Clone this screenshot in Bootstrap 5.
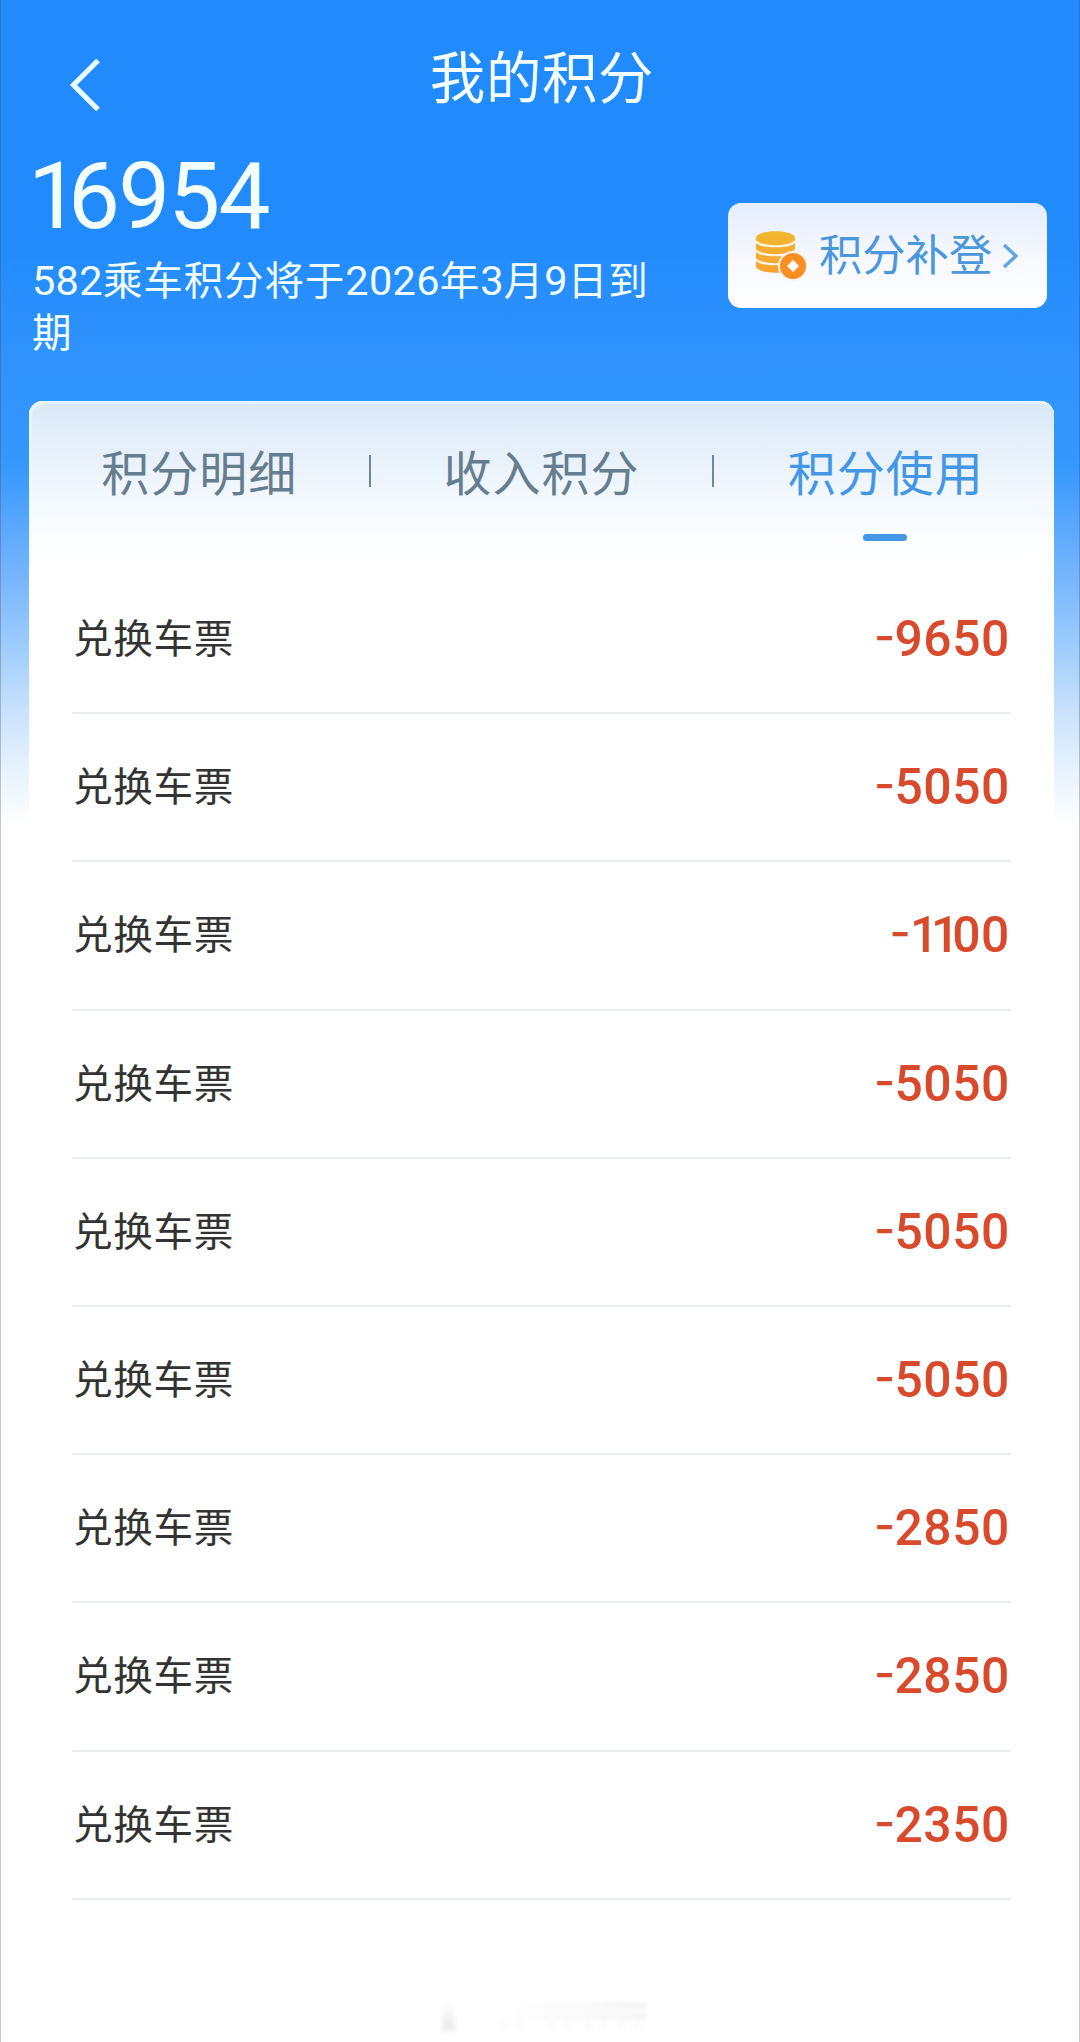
<!DOCTYPE html>
<html lang="zh-CN">
<head>
<meta charset="utf-8">
<meta name="viewport" content="width=device-width, initial-scale=1">
<title>我的积分</title>
<link href="https://cdn.jsdelivr.net/npm/bootstrap@5.3.0/dist/css/bootstrap.min.css" rel="stylesheet">
<style>
body{font-family:Roboto,"Noto Sans CJK SC",sans-serif;background:#fff;color:#333}
.screen{width:1080px;height:2042px;border:solid rgba(70,70,80,.3);border-width:0 1px;background:linear-gradient(#218bfd 0,#218bfd 240px,#2f92fd 350px,#3397fd 460px,#74b4fc 572px,#9dccfc 645px,#c8e1fd 710px,#e7f2fe 770px,#fff 825px);background-origin:border-box}
.topbar{height:150px;padding:0 62px 0 66px}
.topbar h1{font-size:55.5px;line-height:80px;margin-top:40px;letter-spacing:.6px;color:#f4feff}
.back{width:34px;height:56px;margin-top:57px}
.side{width:34px}
.summary{height:251px;padding:0 32px 0 31px;color:#f2feff}
.total{font-size:92.5px;line-height:90px;letter-spacing:-1.8px;margin-left:-4px;padding-top:2px}
.total .one{letter-spacing:-12px}
.expiry{font-size:39.5px;line-height:52px;letter-spacing:.9px;width:630px;margin-top:14px}
.expiry span{font-size:41.5px;letter-spacing:.3px;line-height:1}
.claim{width:319px;height:105px;margin-top:53px;border-radius:13px;background:linear-gradient(#e5edfe,#f7f9fe 55%,#fff);color:#4b97dc;font-size:43.3px;border:0;padding:0 28px 0 27px}
.claim .txt{line-height:60px;margin:2px 0 0 10px;white-space:nowrap}
.panel{width:1025px;height:1560px;margin-left:28px;border-radius:14px 14px 0 0;background:#fff}
.tabs{height:164px;border-radius:14px 14px 0 0;background:linear-gradient(#dae9f8 0,#e6f0fa 50px,#f5faff 105px,#fff 160px);box-shadow:inset 2px 2px 2px #edfbff}
.tabs button{border:0;background:none;padding:0;height:164px;color:#667d90;font-size:48px;letter-spacing:1px;position:relative}
.tabs button span{display:block;line-height:70px;margin-top:-17px}
.tabs button.active{color:#4497e6}
.tabs button.active span{margin-left:2px;margin-right:-2px}
.tabs button.active::after{content:"";position:absolute;left:calc(50% - 21px);top:133px;width:44px;height:7px;border-radius:4px;background:#4497e6}
.tabs i{width:2px;height:32px;background:#738596;margin-top:54px}
.entries{padding:1px 43px 0 43px}
.entry{height:148.2px;border-bottom:2px solid #e9edef;padding:0 1px 0 1px}
.entry .what{font-size:39.6px;letter-spacing:.7px;line-height:60px;padding-top:2px}
.entry .pts{font-size:49.8px;letter-spacing:.6px;font-weight:500;line-height:60px;color:#d84a2b}
.pts .one{letter-spacing:-7.2px}
.pts .neg{font-family:Inter,sans-serif;font-size:46px;letter-spacing:-.8px;font-feature-settings:"case";line-height:1;vertical-align:1px}
.ghost{width:220px;height:34px;margin:38px 0 0 431px;filter:blur(2px);opacity:.75}
</style>
</head>
<body>
<div class="screen overflow-hidden">
  <header class="topbar d-flex justify-content-between align-items-start">
    <svg class="back" viewBox="0 0 34 56" fill="none" stroke="#e8fbff" stroke-width="5.2"><path d="M31 3.500 6.500 28 31 52.500"/></svg>
    <h1 class="fw-normal mb-0">我的积分</h1>
    <div class="side"></div>
  </header>
  <section class="summary d-flex justify-content-between align-items-start">
    <div>
      <div class="total"><span class="one">1</span>6954</div>
      <div class="expiry"><span>582</span>乘车积分将于<span>2026</span>年<span>3</span>月<span>9</span>日到期</div>
    </div>
    <button class="claim btn d-flex align-items-center">
      <svg width="54" height="54" viewBox="0 0 54 54" class="flex-shrink-0">
        <defs><linearGradient id="gold" x1="0" y1="0" x2="0" y2="1"><stop stop-color="#f1b72f"/><stop offset="1" stop-color="#f8a22f"/></linearGradient></defs>
        <path d="M1 9C1 0 40 0 40 9V37C40 46 1 46 1 37Z" fill="url(#gold)"/>
        <path d="M1 12c3 7 36 7 39 0M1 21c3 7 36 7 39 0M1 30c3 7 36 7 39 0" fill="none" stroke="#fff3dc" stroke-width="2.2"/>
        <circle cx="38" cy="37" r="14" fill="#f98f22" stroke="#fbf4ee" stroke-width="2"/>
        <path d="m38 32 5 5-5 5-5-5Z" fill="#fff" stroke="#fff" stroke-width="1.500" stroke-linejoin="round"/>
      </svg>
      <span class="txt">积分补登</span>
      <svg width="18" height="28" viewBox="0 0 18 28" class="flex-shrink-0 ms-auto" fill="none" stroke="#61a5e5" stroke-width="3.4"><path d="m3 3 12 11L3 25"/></svg>
    </button>
  </section>
  <main class="panel">
    <nav class="tabs d-flex">
      <button class="flex-fill"><span>积分明细</span></button><i></i>
      <button class="flex-fill"><span>收入积分</span></button><i></i>
      <button class="flex-fill active"><span>积分使用</span></button>
    </nav>
    <div class="entries">
      <div class="entry d-flex justify-content-between align-items-center"><span class="what">兑换车票</span><span class="pts"><span class="neg">-</span>9650</span></div>
      <div class="entry d-flex justify-content-between align-items-center"><span class="what">兑换车票</span><span class="pts"><span class="neg">-</span>5050</span></div>
      <div class="entry d-flex justify-content-between align-items-center"><span class="what">兑换车票</span><span class="pts"><span class="neg">-</span><span class="one">11</span>00</span></div>
      <div class="entry d-flex justify-content-between align-items-center"><span class="what">兑换车票</span><span class="pts"><span class="neg">-</span>5050</span></div>
      <div class="entry d-flex justify-content-between align-items-center"><span class="what">兑换车票</span><span class="pts"><span class="neg">-</span>5050</span></div>
      <div class="entry d-flex justify-content-between align-items-center"><span class="what">兑换车票</span><span class="pts"><span class="neg">-</span>5050</span></div>
      <div class="entry d-flex justify-content-between align-items-center"><span class="what">兑换车票</span><span class="pts"><span class="neg">-</span>2850</span></div>
      <div class="entry d-flex justify-content-between align-items-center"><span class="what">兑换车票</span><span class="pts"><span class="neg">-</span>2850</span></div>
      <div class="entry d-flex justify-content-between align-items-center"><span class="what">兑换车票</span><span class="pts"><span class="neg">-</span>2350</span></div>
    </div>
  </main>
  <svg class="ghost d-block" viewBox="0 0 220 34">
    <defs>
      <linearGradient id="fadeDown" x1="0" y1="0" x2="0" y2="1"><stop stop-color="#fff"/><stop offset="1" stop-color="#e2e2e2"/></linearGradient>
      <linearGradient id="fadeRight"><stop stop-color="#fff"/><stop offset="1" stop-color="#f0f0f0"/></linearGradient>
    </defs>
    <path d="M10 2h13v30H10z" fill="url(#fadeDown)"/>
    <path d="M70 3h145v8H70zM70 14h145v7H70z" fill="url(#fadeRight)"/>
    <path d="M70 22h5v10h-5zM85 20h5v12h-5zM116 20h6v12h-6zM132 20h5v12h-5zM154 20h6v12h-6zM170 20h5v12h-5zM187 20h5v12h-5zM203 20h5v12h-5z" fill="#f8f8f8"/>
  </svg>
</div>
<script src="https://cdn.jsdelivr.net/npm/bootstrap@5.3.0/dist/js/bootstrap.bundle.min.js"></script>
</body>
</html>
